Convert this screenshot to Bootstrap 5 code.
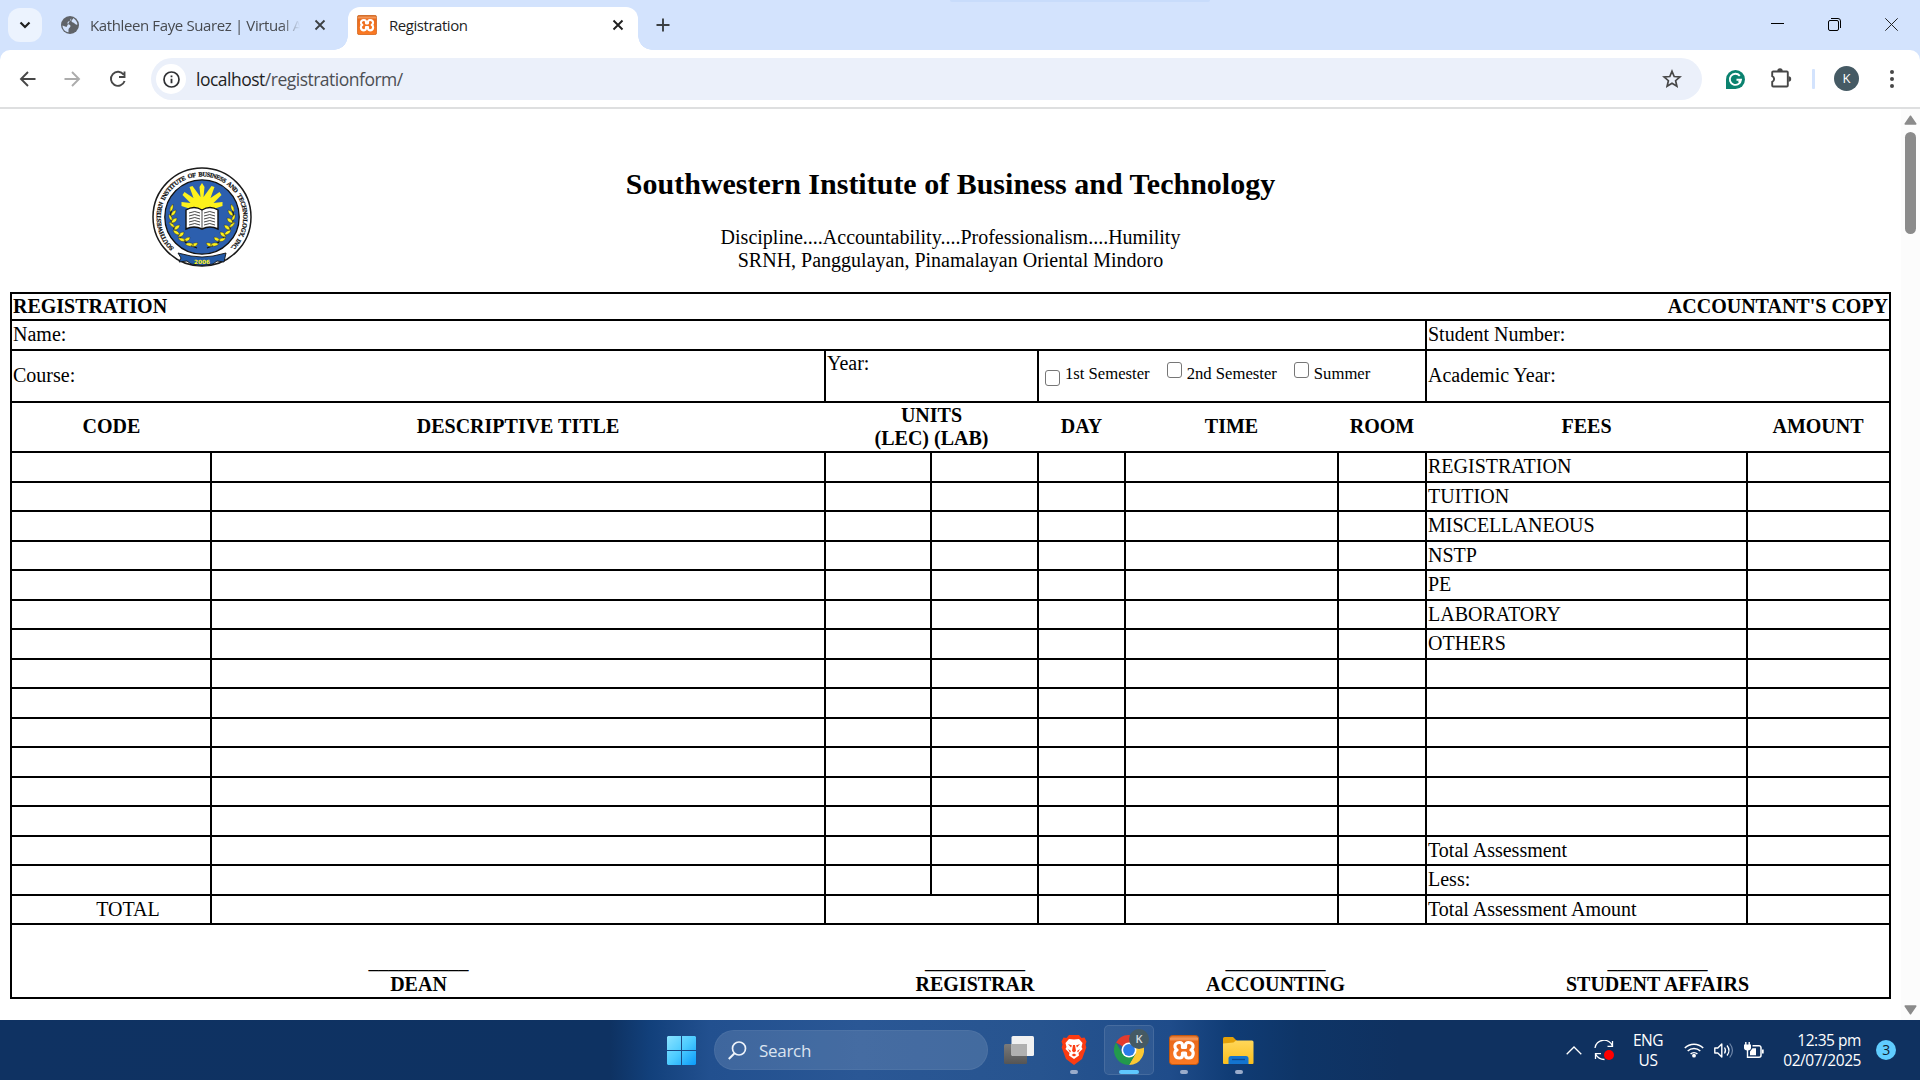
<!DOCTYPE html>
<html lang="en">
<head>
<meta charset="utf-8">
<title>Registration</title>
<link href="https://cdn.jsdelivr.net/npm/bootstrap@5.3.0/dist/css/bootstrap.min.css" rel="stylesheet">
<style>
body{width:1920px;height:1080px;overflow:hidden;font-family:"Open Sans","Noto Sans",sans-serif;color:#1f1f1f;background:#fff}
svg{display:block;flex:none}
/* tab strip */
.tabstrip{height:50px;background:#d3e3fd;padding-left:8px}
.tabstrip .hint{width:260px;height:2px;left:950px;top:0;background:#c8dcfb;border-radius:0 0 2px 2px}
.tabsearch{width:34px;height:34px;border-radius:12px;background:#ecf3fe;margin-top:8px}
.tab-idle{width:288px;margin-left:18px;margin-right:18px;height:50px}
.tabtext{font-size:15px;letter-spacing:-.45px;line-height:20px;white-space:nowrap}
.tab-idle .tabtext{width:210px;margin-left:10px;letter-spacing:-.38px;color:#474a4f;-webkit-mask-image:linear-gradient(90deg,#000 91%,transparent 100%);mask-image:linear-gradient(90deg,#000 91%,transparent 100%)}
.tab-live{width:290px;height:43px;margin-top:7px;margin-left:-18px;background:#fff;border-radius:12px 12px 0 0;padding:0 14px 7px 9px;position:relative}
.tab-live:before,.tab-live:after{content:"";position:absolute;bottom:0;width:14px;height:14px}
.tab-live:before{left:-14px;background:radial-gradient(circle at 0 0,transparent 13.5px,#fff 14px)}
.tab-live:after{right:-14px;background:radial-gradient(circle at 100% 0,transparent 13.5px,#fff 14px)}
.newtab{margin:18px 0 0 18px}
.winbtns{gap:44px;padding-right:22px;height:49px}
/* toolbar */
.bluebg{background:#d3e3fd}
.toolbar{height:59px;background:#fff;border-bottom:2px solid #dedfe0;border-radius:10px 10px 0 0;padding-left:18px}
.omnibox{width:1551px;height:42px;border-radius:21px;background:#ebf0fa;padding-left:5px;padding-right:20px;margin-left:23px;margin-top:1px}
.siteinfo{width:30px;height:30px;border-radius:50%;background:#fff}
.url{font-size:17.5px;letter-spacing:-.5px;margin-left:10px;line-height:24px;color:#4b4e53}
.url b{font-weight:400;color:#1f1f1f}
.divider{width:3px;height:20px;background:#d3e3fd;margin-left:20px;border-radius:1px}
.avatar{width:25px;height:25px;border-radius:50%;background:#455a64;color:#fff;font-size:13px;margin-left:19px}
/* page */
.viewport{height:911px}
.sheet{width:1901px;padding-left:10px;font-family:"Liberation Serif",serif;font-size:20px;line-height:23px;color:#000}
.masthead{height:183px;width:1881px;padding:58px 242px 0 142px}
.masthead h2{font-size:30px;font-weight:700;line-height:34px;margin:0 0 25px}
.regform{width:1881px;table-layout:fixed;border-collapse:collapse}
.regform td,.regform th{border:2px solid #000;padding:0 1px;vertical-align:middle;white-space:nowrap}
.regform .h30 td,.regform .h52 td,.regform .h50 th:not([colspan]),.lines tr:nth-child(odd) td{padding-bottom:1px}
.regform .heads th{border-left-style:none;border-right-style:none;text-align:center}
.regform .heads th:first-child{border-left-style:solid}
.regform .heads th:last-child{border-right-style:solid}
.h27{height:27px}.h30{height:30px}.h52{height:52px}.h50{height:50px}.h74{height:74px}
.regform td.yearcell{vertical-align:top;padding-top:1px}
.lines tr{height:29px}
.lines tr:nth-child(odd){height:30px}
.regform td.totalcell{padding:0 0 1px 34px;text-align:center}
.regform .signs td{border-left-style:none;border-right-style:none;text-align:center;vertical-align:bottom;padding-bottom:1px}
.regform .signs td:first-child{border-left-style:solid}
.regform .signs td:last-child{border-right-style:solid}
.sem{font-size:16.67px;height:46px;line-height:20px;padding-left:5px}
.sem input{appearance:none;width:15px;height:16px;border:1.5px solid #767676;border-radius:3px;background:#fff;margin:9px 0 0 17px}
.sem input.low{margin:17px 0 0}
.sem label{margin:11px 0 0 5px}
/* scrollbar */
.scroller{width:19px;background:#fcfcfc;padding:6px 0 5px 3px}
.thumb{width:11px;height:102px;border-radius:6px;background:#8b8b8b;margin:7px 0 0 1px}
/* taskbar */
.taskbar{height:60px;padding-left:667px;color:#fff;background:linear-gradient(90deg,#0f3262 0,#0e3262 610px,#12407b 650px,#22508f 710px,#2a5795 860px,#27548f 1040px,#1f4c8a 1170px,#103c75 1230px,#0e3567 1300px,#0f3160 1400px,#0f3160 100%)}
.searchbox{width:274px;height:40px;border-radius:20px;background:rgba(255,255,255,.13);border:1px solid rgba(255,255,255,.05);margin-left:18px;margin-right:3px;padding-left:13px;font-size:17px;color:#dbe4f0;letter-spacing:-.3px}
.searchbox span{margin:1px 0 0 12px}
.app{width:55px;height:60px}
.app .plate{width:50px;height:50px;border-radius:5px;background:rgba(255,255,255,.07);border:1px solid rgba(255,255,255,.1)}
.app .run{position:absolute;left:50%;bottom:6px;width:8px;height:4px;margin-left:-4px;border-radius:2px;background:#9aaccb}
.app .run.wide{width:20px;margin-left:-10px;background:#5fc8ff}
.appbadge{position:absolute;left:28px;top:9px;width:20px;height:20px;border-radius:50%;background:#455a64;color:#d7dde0;font-size:11px;font-weight:600}
.tray{font-size:15.5px;line-height:20px;letter-spacing:-.45px}
.lang{width:40px;margin-left:13px}
.clock{width:97px}
.notif{width:20px;height:20px;border-radius:50%;background:#60cdff;color:#10212e;font-size:14px;margin-left:15px;margin-right:24px}
</style>
<script src="https://cdn.jsdelivr.net/npm/bootstrap@5.3.0/dist/js/bootstrap.bundle.min.js"></script>
</head>
<body class="d-flex flex-column">
<svg width="0" height="0" class="position-absolute">
  <defs>
    <linearGradient id="org" x1="0" y1="0" x2="0" y2="1"><stop offset="0" stop-color="#d8661c"/><stop offset=".12" stop-color="#f59a5c"/><stop offset=".2" stop-color="#ea6a1c"/><stop offset="1" stop-color="#fb7a24"/></linearGradient>
    <symbol id="xampp" viewBox="0 0 30 30">
      <rect x=".5" y=".5" width="29" height="29" rx="3" fill="url(#org)" stroke="#c4580f"/>
      <path d="M10.500 7.500c-3.500 0-5 2.500-4.500 4.500.3 1.500 1 2.500 2 3-1.500.6-2.300 2-2.200 3.600.2 2.600 2 4.400 4.700 4.400 2 0 3-1.200 3-3v-2h3v2c0 1.800 1 3 3 3 2.700 0 4.500-1.800 4.700-4.400.1-1.600-.7-3-2.200-3.600 1-.5 1.700-1.500 2-3 .5-2-1-4.500-4.500-4.500-2 0-3 1.200-3 3v2h-3v-2c0-1.800-1-3-3-3z" fill="none" stroke="#fff" stroke-width="3.200" stroke-linejoin="round"/>
    </symbol>
  </defs>
</svg>

<header>
  <div class="tabstrip d-flex align-items-start position-relative">
    <div class="hint position-absolute"></div>
    <div class="tabsearch d-flex align-items-center justify-content-center">
      <svg width="12" height="8" viewBox="0 0 12 8"><path d="M1.500 1.500 6 6l4.500-4.500" fill="none" stroke="#1f1f1f" stroke-width="2.200"/></svg>
    </div>
    <div class="tab-idle d-flex align-items-center pb-2">
      <svg width="20" height="20" viewBox="0 0 20 20" class="mt-2"><circle cx="10" cy="10" r="9" fill="#5f6368"/><path d="M11.500 2.500c-1 1.500.5 2-1 3S7.500 6 7.500 8s3 1 3 3-2 1.500-2 3.500v2.800C5 17 2.500 14 2.500 10.500l4 1.500M13 3c2.500 1.200 4.300 3.700 4.500 6.500-1.500.5-2.500-.5-3.500-1.500s-2.500-.5-2.500-2S13.500 4.500 13 3z" fill="#d3e3fd"/></svg>
      <span class="tabtext mt-2">Kathleen Faye Suarez | Virtual A</span>
      <svg width="12" height="12" viewBox="0 0 12 12" class="mt-2" style="margin-left:14px"><path d="m1.500 1.500 9 9m0-9-9 9" stroke="#3c4043" stroke-width="1.800"/></svg>
    </div>
    <div class="tab-live d-flex align-items-center">
      <svg width="20" height="20"><use href="#xampp"/></svg>
      <span class="tabtext ms-2 ps-1">Registration</span>
      <svg width="12" height="12" viewBox="0 0 12 12" class="ms-auto"><path d="m1.500 1.500 9 9m0-9-9 9" stroke="#1f1f1f" stroke-width="1.900"/></svg>
    </div>
    <svg width="14" height="14" viewBox="0 0 14 14" class="newtab"><path d="M7 .5v13M.5 7h13" stroke="#3c4043" stroke-width="1.900"/></svg>
    <div class="winbtns d-flex align-items-center ms-auto">
      <svg width="13" height="13" viewBox="0 0 13 13"><path d="M0 5.500h13" stroke="#000"/></svg>
      <svg width="13" height="13" viewBox="0 0 13 13"><rect x=".5" y="2.500" width="10" height="10" rx="1.500" fill="none" stroke="#000"/><path d="M3 .5h7a2.500 2.500 0 0 1 2.500 2.500v7" fill="none" stroke="#000"/></svg>
      <svg width="13" height="13" viewBox="0 0 13 13"><path d="m.3.3 12.400 12.400m0-12.400L.3 12.700" stroke="#222"/></svg>
    </div>
  </div>
  <div class="bluebg">
  <div class="toolbar d-flex align-items-center">
    <svg width="20" height="20" viewBox="0 0 20 20"><path d="M17.500 10H3.500M10 3l-7 7 7 7" fill="none" stroke="#474747" stroke-width="1.900"/></svg>
    <svg width="20" height="20" viewBox="0 0 20 20" style="margin-left:24px"><path d="M2.500 10h14M10 3l7 7-7 7" fill="none" stroke="#acacac" stroke-width="1.900"/></svg>
    <svg width="20" height="20" viewBox="0 0 20 20" style="margin-left:26px"><path d="M15.700 5.800A7 7 0 1 0 16.600 12M16.500 2.500V8H11" fill="none" stroke="#474747" stroke-width="1.900"/></svg>
    <div class="omnibox d-flex align-items-center">
      <div class="siteinfo d-flex align-items-center justify-content-center"><svg width="17" height="17" viewBox="0 0 17 17"><circle cx="8.500" cy="8.500" r="7.500" fill="none" stroke="#2f3033" stroke-width="1.700"/><path d="M8.500 7.700v4.500M8.500 4.500v1.800" stroke="#2f3033" stroke-width="1.800"/></svg></div>
      <span class="url"><b>localhost</b>/registrationform/</span>
      <svg width="20" height="20" viewBox="0 0 20 20" class="ms-auto"><path d="m10 2.300 2.200 5.200 5.700.5-4.300 3.700 1.300 5.600-4.900-3-4.900 3 1.300-5.600L2.100 8l5.700-.5z" fill="none" stroke="#474747" stroke-width="1.700"/></svg>
    </div>
    <svg width="19" height="19" viewBox="0 0 19 19" style="margin:1px 0 0 24px"><path d="M0 19V9.500A9.500 9.500 0 1 1 9.500 19z" fill="#0b826f"/><path d="M13.800 5.800A5.600 5.600 0 1 0 15 9.700h-4.500M15 9.700l-2.300 3" fill="none" stroke="#fff" stroke-width="1.900"/></svg>
    <svg width="22" height="22" viewBox="0 0 22 22" style="margin:-2px 0 0 25px"><path d="M3.200 4.500h13.600a1 1 0 0 1 1 1v13a1 1 0 0 1-1 1H3.200a1 1 0 0 1-1-1v-3.700a3 3 0 0 0 0-5.600V5.500a1 1 0 0 1 1-1z" fill="none" stroke="#474747" stroke-width="1.900"/><path d="M7.300 4a2.700 2.700 0 0 1 5.400 0zM18.500 9.300a2.700 2.700 0 0 1 0 5.400z" fill="#474747"/></svg>
    <div class="divider"></div>
    <div class="avatar d-flex align-items-center justify-content-center">K</div>
    <svg width="6" height="20" viewBox="0 0 6 20" style="margin-left:30px"><g fill="#474747"><circle cx="3" cy="3" r="2"/><circle cx="3" cy="10" r="2"/><circle cx="3" cy="17" r="2"/></g></svg>
  </div>
  </div>
</header>

<main class="viewport d-flex">
  <div class="sheet">
    <div class="masthead d-flex align-items-start">
      <svg width="100" height="100" viewBox="0 0 100 100">
        <defs><path id="ring" d="M22 81A41.300 41.300 0 1 1 78 81"/></defs>
        <circle cx="50" cy="50" r="49" fill="#fff" stroke="#1a1a1a" stroke-width="1.500"/>
        <circle cx="50" cy="50" r="37.200" fill="#2c5fae" stroke="#111" stroke-width="1.300"/>
        <text font-family="Liberation Serif, serif" font-weight="700" font-size="6.300" word-spacing="1.500" fill="#111" stroke="#111" stroke-width=".25"><textPath href="#ring" textLength="197" lengthAdjust="spacing">SOUTHWESTERN INSTITUTE OF BUSINESS AND TECHNOLOGY, INC.</textPath></text>
        <path d="M50 16l2.500 4-1 10 8-11 3 1-4 11 9-6 2 3-8 8 9-1v4l-9 3H38.500l-9-3v-4l9 1-8-8 2-3 9 6-4-11 3-1 8 11-1-10z" fill="#fdf21c"/>
        <path d="M34 62V43q8-5 16 0 8-5 16 0v19q-8-4-16 0-8-4-16 0z" fill="#fff" stroke="#111" stroke-width="1.400"/>
        <path d="M50 43v20M37 46q6-3 11 0M37 49q6-3 11 0M37 52q6-3 11 0M37 55q6-3 11 0M37 58q6-3 11 0M52 46q6-3 11 0M52 49q6-3 11 0M52 52q6-3 11 0M52 55q6-3 11 0M52 58q6-3 11 0" fill="none" stroke="#333" stroke-width=".9"/>
        <g id="wreath">
          <path d="M20 39q-4 16 5 27 7 11 20 15" fill="none" stroke="#111" stroke-width="1.200"/>
          <path d="M21 37q-4 3-3 8 4-2 3-8zM24 43q-5 1-5 6 5-1 5-6zM17 47q-1 5 3 7 1-4-3-7zM25 51q-5 0-6 5 6 0 6-5zM17 55q1 5 6 6-1-5-6-6zM28 58q-6 0-6 5 5 0 6-5zM21 63q1 5 7 5-2-5-7-5zM32 65q-5 0-6 5 6 0 6-5zM26 71q3 5 8 3-3-4-8-3zM38 70q-5 0-6 4 6 1 6-4zM33 77q5 4 9 1-4-4-9-1zM46 76q-5-1-7 3 5 2 7-3z" fill="#fdf21c" stroke="#222" stroke-width=".4"/>
        </g>
        <use href="#wreath" transform="matrix(-1 0 0 1 100 0)"/>
        <path d="M26 86l13 3q11 2 22 0l13-3-2 9-7-1-4 3q-11 3-22 0l-4-3-8 1 2-4z" fill="#245aa6" stroke="#111" stroke-width=".9"/>
        <text x="50" y="96.500" text-anchor="middle" font-family="DejaVu Sans, sans-serif" font-weight="700" font-size="5.800" fill="#fdf21c">2006</text>
      </svg>
      <div class="flex-grow-1 text-center">
        <h2>Southwestern Institute of Business and Technology</h2>
        <div>Discipline....Accountability....Professionalism....Humility</div>
        <div>SRNH, Panggulayan, Pinamalayan Oriental Mindoro</div>
      </div>
    </div>

    <table class="regform">
      <colgroup><col style="width:200px"><col style="width:614px"><col style="width:106px"><col style="width:107px"><col style="width:87px"><col style="width:213px"><col style="width:88px"><col style="width:321px"><col style="width:143px"></colgroup>
      <tbody>
        <tr class="h27"><th colspan="9"><div class="d-flex justify-content-between"><span>REGISTRATION</span><span>ACCOUNTANT'S COPY</span></div></th></tr>
        <tr class="h30"><td colspan="7">Name:</td><td colspan="2">Student Number:</td></tr>
        <tr class="h52"><td colspan="2">Course:</td><td colspan="2" class="yearcell">Year:</td>
          <td colspan="3"><div class="sem d-flex align-items-start"><input type="checkbox" class="low" id="s1"><label for="s1">1st Semester</label><input type="checkbox" id="s2"><label for="s2">2nd Semester</label><input type="checkbox" id="s3"><label for="s3">Summer</label></div></td>
          <td colspan="2">Academic Year:</td></tr>
        <tr class="heads h50"><th>CODE</th><th>DESCRIPTIVE TITLE</th><th colspan="2">UNITS<br>(LEC) (LAB)</th><th>DAY</th><th>TIME</th><th>ROOM</th><th>FEES</th><th>AMOUNT</th></tr>
      </tbody>
      <tbody class="lines">
        <tr><td></td><td></td><td></td><td></td><td></td><td></td><td></td><td>REGISTRATION</td><td></td></tr>
        <tr><td></td><td></td><td></td><td></td><td></td><td></td><td></td><td>TUITION</td><td></td></tr>
        <tr><td></td><td></td><td></td><td></td><td></td><td></td><td></td><td>MISCELLANEOUS</td><td></td></tr>
        <tr><td></td><td></td><td></td><td></td><td></td><td></td><td></td><td>NSTP</td><td></td></tr>
        <tr><td></td><td></td><td></td><td></td><td></td><td></td><td></td><td>PE</td><td></td></tr>
        <tr><td></td><td></td><td></td><td></td><td></td><td></td><td></td><td>LABORATORY</td><td></td></tr>
        <tr><td></td><td></td><td></td><td></td><td></td><td></td><td></td><td>OTHERS</td><td></td></tr>
        <tr><td></td><td></td><td></td><td></td><td></td><td></td><td></td><td></td><td></td></tr>
        <tr><td></td><td></td><td></td><td></td><td></td><td></td><td></td><td></td><td></td></tr>
        <tr><td></td><td></td><td></td><td></td><td></td><td></td><td></td><td></td><td></td></tr>
        <tr><td></td><td></td><td></td><td></td><td></td><td></td><td></td><td></td><td></td></tr>
        <tr><td></td><td></td><td></td><td></td><td></td><td></td><td></td><td></td><td></td></tr>
        <tr><td></td><td></td><td></td><td></td><td></td><td></td><td></td><td></td><td></td></tr>
        <tr><td></td><td></td><td></td><td></td><td></td><td></td><td></td><td>Total Assessment</td><td></td></tr>
        <tr><td></td><td></td><td></td><td></td><td></td><td></td><td></td><td>Less:</td><td></td></tr>
        <tr><td class="totalcell">TOTAL</td><td></td><td colspan="2"></td><td></td><td></td><td></td><td>Total Assessment Amount</td><td></td></tr>
      </tbody>
      <tfoot>
        <tr class="signs h74"><td colspan="2">__________<br><b>DEAN</b></td><td colspan="3">__________<br><b>REGISTRAR</b></td><td colspan="2">__________<br><b>ACCOUNTING</b></td><td colspan="2">__________<br><b>STUDENT AFFAIRS</b></td></tr>
      </tfoot>
    </table>
  </div>
  <div class="scroller d-flex flex-column">
    <svg width="13" height="10" viewBox="0 0 13 10"><path d="M6.500 1.200 11.800 9H1.200z" fill="#8b8b8b" stroke="#8b8b8b" stroke-width="1.500" stroke-linejoin="round"/></svg>
    <div class="thumb"></div>
    <svg width="13" height="10" viewBox="0 0 13 10" class="mt-auto"><path d="M6.500 8.800 11.800 1H1.200z" fill="#8b8b8b" stroke="#8b8b8b" stroke-width="1.500" stroke-linejoin="round"/></svg>
  </div>
</main>

<footer class="taskbar d-flex align-items-center">
  <svg width="29" height="29" viewBox="0 0 29 29"><defs><linearGradient id="win" x1="0" y1="0" x2="1" y2="1"><stop offset="0" stop-color="#8be3ff"/><stop offset=".5" stop-color="#4ccbff"/><stop offset="1" stop-color="#0a9bfa"/></linearGradient></defs><path d="M1 0h13v14H0V1zM15 0h13l1 1v13H15zM0 15h14v14H1l-1-1zM15 15h14v13l-1 1H15z" fill="url(#win)"/></svg>
  <div class="searchbox d-flex align-items-center">
    <svg width="19" height="19" viewBox="0 0 19 19"><circle cx="11" cy="7.500" r="6.500" fill="none" stroke="#eef3fa" stroke-width="1.700"/><path d="m6.300 12.500-5.500 5.500" stroke="#eef3fa" stroke-width="2"/></svg>
    <span>Search</span>
  </div>
  <div class="app d-flex align-items-center justify-content-center">
    <svg width="30" height="28" viewBox="0 0 30 28"><defs><linearGradient id="tv" x1="0" y1="0" x2="0" y2="1"><stop offset="0" stop-color="#7a7a7a"/><stop offset="1" stop-color="#555"/></linearGradient></defs><rect y="8" width="23" height="20" rx="1.500" fill="url(#tv)"/><rect x="7.500" width="22.500" height="20" rx="1.500" fill="#f1f1f1"/><path d="M7.500 8H23v12H9a1.500 1.500 0 0 1-1.500-1.500z" fill="#b0b0b0"/></svg>
  </div>
  <div class="app d-flex align-items-center justify-content-center position-relative">
    <svg width="26" height="30" viewBox="0 0 26 30"><path d="M8 0h10l2.500 3 3-.5 2 4-1 3 .8 3L21 24l-8 6-8-6L.7 12.500l.8-3-1-3 2-4 3 .5z" fill="#fb3b12"/><path d="M13 4.500 18 4l3.500 4-1 4 1 2-4 4 .5 2.500-5 3.500-5-3.500.5-2.500-4-4 1-2-1-4L8 4z" fill="#fff"/><path d="m7 9 4 1.500-1 2zM19 9l-4 1.500 1 2zM12 10h2l1 6-2 1.500L11 16zM7 14l3 2-1 1.500zM19 14l-3 2 1 1.500zM10.500 20l2.500-1.500 2.500 1.500-2.500 1.500z" fill="#fb3b12"/></svg>
    <span class="run"></span>
  </div>
  <div class="app d-flex align-items-center justify-content-center position-relative">
    <div class="plate d-flex align-items-center justify-content-center"><svg width="30" height="30" viewBox="0 0 30 30"><path d="M15 15 2 7.500A15 15 0 0 1 28 7.500H15z" fill="#e33b2e"/><path d="M15 7.500h13A15 15 0 0 1 15 30l6.500-11.200z" fill="#fcc934"/><path d="M8.500 18.800 2 7.500A15 15 0 0 0 15 30l6.500-11.200z" fill="#229a4c"/><circle cx="15" cy="15" r="7.500" fill="#fff"/><circle cx="15" cy="15" r="5.900" fill="#2a7be8"/></svg></div>
    <span class="appbadge d-flex align-items-center justify-content-center">K</span>
    <span class="run wide"></span>
  </div>
  <div class="app d-flex align-items-center justify-content-center position-relative">
    <svg width="30" height="30"><use href="#xampp"/></svg><span class="run"></span>
  </div>
  <div class="app d-flex align-items-center justify-content-center position-relative">
    <svg width="31" height="27" viewBox="0 0 31 27"><defs><linearGradient id="fo" x1="0" y1="0" x2="0" y2="1"><stop offset="0" stop-color="#ffd75a"/><stop offset="1" stop-color="#fbbf1d"/></linearGradient></defs><path d="M0 1.500A1.500 1.500 0 0 1 1.500 0H10l4 4v6H0z" fill="#e3a007"/><path d="M0 6.500 10.500 5.500 13 3.500h16a1.500 1.500 0 0 1 1.500 1.500v21a1 1 0 0 1-1 1H1a1 1 0 0 1-1-1z" fill="url(#fo)"/><path d="M5.500 27v-5.500a2.500 2.500 0 0 1 2.500-2.500h15a2.500 2.500 0 0 1 2.500 2.500V27z" fill="#1374cf"/><path d="M9 22.500h13" stroke="#0a4a94" stroke-width="1.300"/></svg><span class="run"></span>
  </div>
  <div class="tray d-flex align-items-center ms-auto">
    <svg width="16" height="9" viewBox="0 0 16 9"><path d="m.7 8.300 7.300-7.300 7.300 7.300" fill="none" stroke="#fff" stroke-width="1.300"/></svg>
    <svg width="21" height="21" viewBox="0 0 21 21" style="margin-left:12px"><path d="M1 8A9 8.500 0 0 1 18.500 6M18.500 1v5.300h-5M1.500 19v-5.300h5.500M1.500 14q3 5.500 9 5.500" fill="none" stroke="#fff" stroke-width="1.300"/><circle cx="15" cy="15" r="5" fill="#f00"/></svg>
    <div class="lang text-center">ENG<br>US</div>
    <svg width="20" height="16" viewBox="0 0 20 16" style="margin-left:16px"><path d="M.8 6a13 13 0 0 1 18.400 0M3.700 9a9 9 0 0 1 12.600 0M6.600 12a5 5 0 0 1 6.800 0" fill="none" stroke="#fff" stroke-width="1.500"/><circle cx="10" cy="13.700" r="1.900" fill="#fff"/></svg>
    <svg width="20" height="17" viewBox="0 0 20 17" style="margin-left:10px"><path d="M.8 6h3l4-4v13l-4-4h-3z" fill="none" stroke="#fff" stroke-width="1.400" stroke-linejoin="round"/><path d="M10.500 5.500q2 3 0 6M13 3.500q4 5 0 10" fill="none" stroke="#fff" stroke-width="1.300"/><path d="M15.700 1.500q5.500 7 0 14" fill="none" stroke="#6f86a8" stroke-width="1.200"/></svg>
    <svg width="20" height="17" viewBox="0 0 20 17" style="margin-left:10px"><path d="M1.800 0v3M5.200 0v3M3.500 7v9" stroke="#fff" stroke-width="1.400"/><path d="M0 2.500h7V6q0 2-3.500 2.500Q0 8 0 6z" fill="#fff"/><path d="M8.500 3.700H15a2 2 0 0 1 2 2v7.600a2 2 0 0 1-2 2H3.500" fill="none" stroke="#fff" stroke-width="1.500"/><path d="M6 9.500l2.500-3.300H12v7H6zM18 7.500h1.700v4H18z" fill="#fff"/></svg>
    <div class="clock text-end">12:35 pm<br>02/07/2025</div>
    <div class="notif d-flex align-items-center justify-content-center">3</div>
  </div>
</footer>
</body>
</html>
